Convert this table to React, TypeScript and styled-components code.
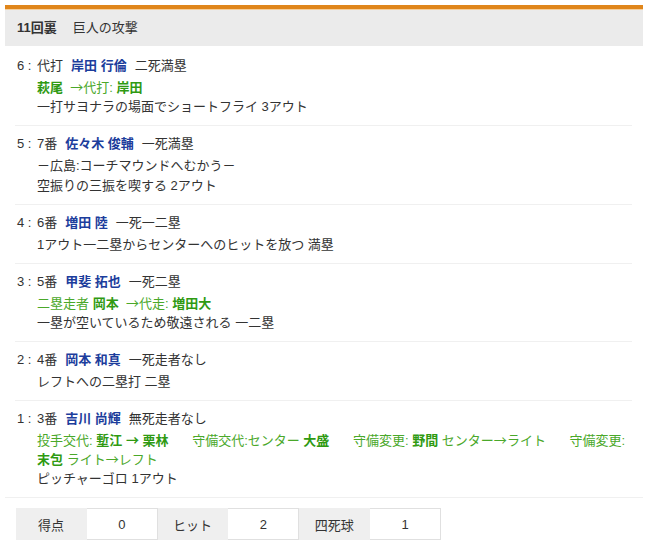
import React from "react";
import styled, { createGlobalStyle } from "styled-components";

const Global = createGlobalStyle`
  html, body { margin: 0; padding: 0; background: #fff; }
  body {
    font-family: "Liberation Sans", "Noto Sans CJK JP", sans-serif;
    font-size: 13px;
    color: #333;
  }
`;

const Page = styled.div`
  padding: 5px 7px 0 5px;
  width: 638px;
`;

const Header = styled.div`
  border-top: 4px solid #e0861b;
  box-shadow: inset 0 1px 0 #f6cf9c;
  background: #ebebeb;
  height: 37px;
  display: flex;
  align-items: center;
  padding-left: 12px;
  gap: 16px;
  line-height: 20px;
`;

const Inning = styled.span`
  font-weight: bold;
  color: #333;
`;

const List = styled.div`
  border-bottom: 1px solid #f0f0f0;
  padding-top: 2px;
`;

const Row = styled.div<{ $last?: boolean }>`
  margin: 0 11px 0 10px;
  padding: 8px 0 8px 2px;
  border-bottom: ${(p) => (p.$last ? "none" : "1px solid #f0f0f0")};
  line-height: 20px;
`;

const Title = styled.div`
  margin-bottom: 2px;
`;

const Num = styled.span`
  display: inline-block;
  width: 20px;
  white-space: pre;
`;

const Name = styled.span`
  color: #1c3d9c;
  font-weight: bold;
  margin: 0 8px;
`;

const Detail = styled.div`
  padding-left: 20px;
`;

const Green = styled.div`
  padding-left: 20px;
  color: #4aa82a;
  line-height: 19px;
`;

const G = styled.b`
  color: #2f9a12;
  font-weight: bold;
`;

const Arrow = styled.span`
  font-family: "Noto Sans CJK JP", sans-serif;
  line-height: 0;
`;

const Gap = styled.span`
  display: inline-block;
  width: 20px;
`;

const Stats = styled.div`
  display: flex;
  margin: 10px 0 0 11px;
  width: 425px;
  height: 32px;
`;

const Cell = styled.div<{ $label?: boolean }>`
  flex: 1;
  display: flex;
  align-items: center;
  justify-content: center;
  background: ${(p) => (p.$label ? "#efefef" : "#fff")};
  border: 1px solid ${(p) => (p.$label ? "#efefef" : "#e0e0e0")};
  border-left: none;
  color: #333;
`;

export default function App() {
  return (
    <>
      <Global />
      <Page>
        <Header>
          <Inning>11回裏</Inning>
          <span>巨人の攻撃</span>
        </Header>
        <List>
          <Row>
            <Title>
              <Num>6 : </Num>代打<Name>岸田 行倫</Name>二死満塁
            </Title>
            <Green>
              <G>萩尾</G>&nbsp; <Arrow>→</Arrow>代打: <G>岸田</G>
            </Green>
            <Detail>一打サヨナラの場面でショートフライ 3アウト</Detail>
          </Row>
          <Row>
            <Title>
              <Num>5 : </Num>7番<Name>佐々木 俊輔</Name>一死満塁
            </Title>
            <Detail>－広島:コーチマウンドへむかう－</Detail>
            <Detail>空振りの三振を喫する 2アウト</Detail>
          </Row>
          <Row>
            <Title>
              <Num>4 : </Num>6番<Name>増田 陸</Name>一死一二塁
            </Title>
            <Detail>1アウト一二塁からセンターへのヒットを放つ 満塁</Detail>
          </Row>
          <Row>
            <Title>
              <Num>3 : </Num>5番<Name>甲斐 拓也</Name>一死二塁
            </Title>
            <Green>
              二塁走者 <G>岡本</G>&nbsp; <Arrow>→</Arrow>代走: <G>増田大</G>
            </Green>
            <Detail>一塁が空いているため敬遠される 一二塁</Detail>
          </Row>
          <Row>
            <Title>
              <Num>2 : </Num>4番<Name>岡本 和真</Name>一死走者なし
            </Title>
            <Detail>レフトへの二塁打 二塁</Detail>
          </Row>
          <Row $last>
            <Title>
              <Num>1 : </Num>3番<Name>吉川 尚輝</Name>無死走者なし
            </Title>
            <Green>
              投手交代: <G>塹江</G> <G><Arrow>→</Arrow> 栗林</G>
              <Gap /> 守備交代:センター <G>大盛</G>
              <Gap /> 守備変更: <G>野間</G> センター<Arrow>→</Arrow>ライト <Gap />守備変更: <G>末包</G> ライト<Arrow>→</Arrow>レフト
            </Green>
            <Detail>ピッチャーゴロ 1アウト</Detail>
          </Row>
        </List>
        <Stats>
          <Cell $label>得点</Cell>
          <Cell>0</Cell>
          <Cell $label>ヒット</Cell>
          <Cell>2</Cell>
          <Cell $label>四死球</Cell>
          <Cell>1</Cell>
        </Stats>
      </Page>
    </>
  );
}
